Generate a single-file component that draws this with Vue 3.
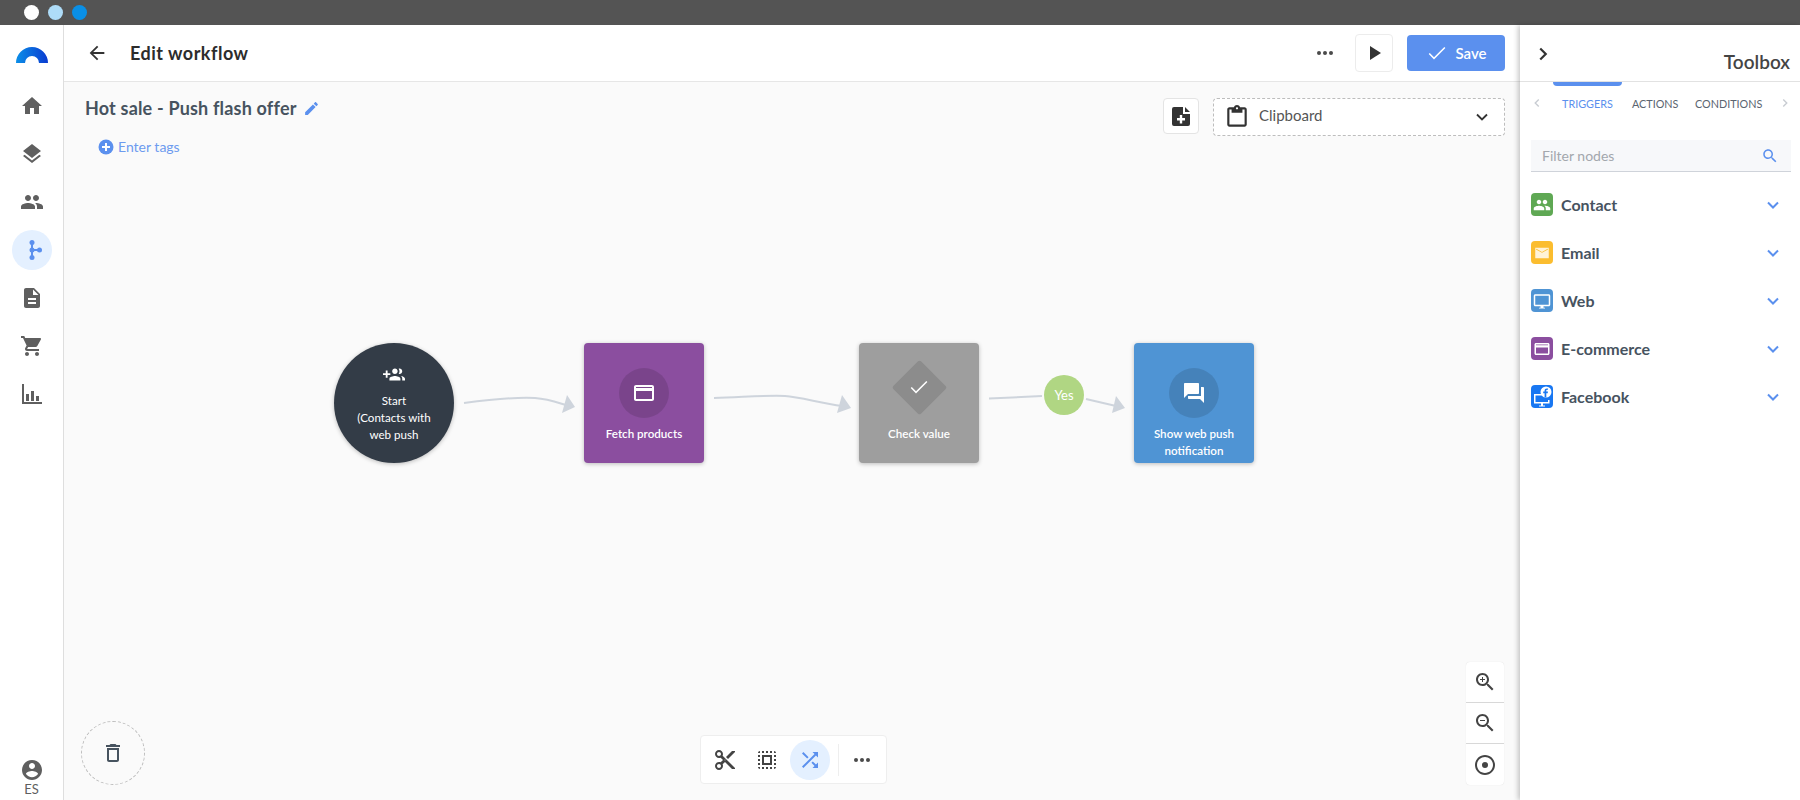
<script setup>
const P = {
  home: 'M10 20v-6h4v6h5v-8h3L12 3 2 12h3v8z',
  layers: 'M11.99 18.54l-7.37-5.73L3 14.07l9 7 9-7-1.63-1.27-7.38 5.74zM12 16l7.36-5.73L21 9l-9-7-9 7 1.63 1.27L12 16z',
  people: 'M16 11c1.66 0 2.99-1.34 2.99-3S17.66 5 16 5c-1.66 0-3 1.34-3 3s1.34 3 3 3zm-8 0c1.66 0 2.99-1.34 2.99-3S9.66 5 8 5C6.34 5 5 6.34 5 8s1.34 3 3 3zm0 2c-2.33 0-7 1.17-7 3.5V19h14v-2.5c0-2.33-4.67-3.5-7-3.5zm8 0c-.29 0-.62.02-.97.05 1.16.84 1.97 1.97 1.97 3.45V19h6v-2.5c0-2.33-4.67-3.5-7-3.5z',
  doc: 'M14 2H6c-1.1 0-1.99.9-1.99 2L4 20c0 1.1.89 2 1.99 2H18c1.1 0 2-.9 2-2V8l-6-6zm2 16H8v-2h8v2zm0-4H8v-2h8v2zm-3-5V3.5L18.5 9H13z',
  cart: 'M7 18c-1.1 0-1.99.9-1.99 2S5.9 22 7 22s2-.9 2-2-.9-2-2-2zM1 2v2h2l3.6 7.59-1.35 2.45c-.16.28-.25.61-.25.96 0 1.1.9 2 2 2h12v-2H7.42c-.14 0-.25-.11-.25-.25l.03-.12.9-1.63h7.45c.75 0 1.41-.41 1.75-1.03l3.58-6.49c.08-.14.12-.31.12-.48 0-.55-.45-1-1-1H5.21l-.94-2H1zm16 16c-1.1 0-1.99.9-1.99 2s.89 2 1.99 2 2-.9 2-2-.9-2-2-2z',
  chart: 'M2 2h2v18h18v2H2zM6 12h3v7H6zM11 9h3v10h-3zM16 14h3v5h-3z',
  account: 'M12 2C6.48 2 2 6.48 2 12s4.48 10 10 10 10-4.48 10-10S17.52 2 12 2zm0 3c1.66 0 3 1.34 3 3s-1.34 3-3 3-3-1.34-3-3 1.34-3 3-3zm0 14.2c-2.5 0-4.71-1.28-6-3.22.03-1.99 4-3.08 6-3.08 1.99 0 5.97 1.09 6 3.08-1.29 1.94-3.5 3.22-6 3.22z',
  back: 'M20 11H7.83l5.59-5.59L12 4l-8 8 8 8 1.41-1.41L7.83 13H20v-2z',
  edit: 'M3 17.25V21h3.75L17.81 9.94l-3.75-3.75L3 17.25zM20.71 7.04c.39-.39.39-1.02 0-1.41l-2.34-2.34c-.39-.39-1.02-.39-1.41 0l-1.83 1.83 3.75 3.75 1.83-1.83z',
  play: 'M8 5v14l11-7z',
  noteAdd: 'M5 3h9v7h7v10a2 2 0 0 1-2 2H5a2 2 0 0 1-2-2V5a2 2 0 0 1 2-2zM16 3l5 5h-5zM10.800 11v3H8v2.500h2.800v3h2.400v-3H16V14h-2.800v-3z',
  clip: 'M19 3h-4.18C14.4 1.84 13.3 1 12 1c-1.3 0-2.4.84-2.82 2H5c-1.1 0-2 .9-2 2v14c0 1.1.9 2 2 2h14c1.1 0 2-.9 2-2V5c0-1.1-.9-2-2-2zm-7 0c.55 0 1 .45 1 1s-.45 1-1 1-1-.45-1-1 .45-1 1-1zm7 16H5V5h2v3h10V5h2v14z',
  search: 'M15.5 14h-.79l-.28-.27C15.41 12.59 16 11.11 16 9.5 16 5.91 13.09 3 9.5 3S3 5.91 3 9.5 5.91 16 9.5 16c1.61 0 3.09-.59 4.23-1.57l.27.28v.79l5 4.99L20.49 19l-4.99-5zm-6 0C7.01 14 5 11.99 5 9.5S7.01 5 9.5 5 14 7.01 14 9.5 11.99 14 9.5 14z',
  card: 'M20 4H4c-1.11 0-1.99.89-1.99 2L2 18c0 1.11.89 2 2 2h16c1.11 0 2-.89 2-2V6c0-1.11-.89-2-2-2zm0 14H4v-8h16v8zm0-11H4V6h16v1z',
  forum: 'M21 6h-2v9H6v2c0 .55.45 1 1 1h11l4 4V7c0-.55-.45-1-1-1zm-4 6V3c0-.55-.45-1-1-1H3c-.55 0-1 .45-1 1v14l4-4h10c.55 0 1-.45 1-1z',
  cut: 'M9.64 7.64c.23-.5.36-1.05.36-1.64 0-2.21-1.79-4-4-4S2 3.79 2 6s1.79 4 4 4c.59 0 1.14-.13 1.64-.36L10 12l-2.36 2.36C7.14 14.13 6.59 14 6 14c-2.21 0-4 1.79-4 4s1.79 4 4 4 4-1.79 4-4c0-.59-.13-1.14-.36-1.64L12 14l7 7h3v-1L9.64 7.64zM6 8c-1.1 0-2-.89-2-2s.9-2 2-2 2 .89 2 2-.9 2-2 2zm0 12c-1.1 0-2-.89-2-2s.9-2 2-2 2 .89 2 2-.9 2-2 2zm6-7.5c-.28 0-.5-.22-.5-.5s.22-.5.5-.5.5.22.5.5-.22.5-.5.5zM19 3l-6 6 2 2 7-7V3z',
  select: 'M3 5h2V3c-1.1 0-2 .9-2 2zm0 8h2v-2H3v2zm4 8h2v-2H7v2zM3 9h2V7H3v2zm10-6h-2v2h2V3zm6 0v2h2c0-1.1-.9-2-2-2zM5 21v-2H3c0 1.1.9 2 2 2zm-2-4h2v-2H3v2zM9 3H7v2h2V3zm2 18h2v-2h-2v2zm8-8h2v-2h-2v2zm0 8c1.1 0 2-.9 2-2h-2v2zm0-12h2V7h-2v2zm0 8h2v-2h-2v2zm-4 4h2v-2h-2v2zm0-16h2V3h-2v2zM7 17h10V7H7v10zm2-8h6v6H9V9z',
  shuffle: 'M10.59 9.17L5.41 4 4 5.41l5.17 5.17 1.42-1.41zM14.5 4l2.04 2.04L4 18.59 5.41 20 17.96 7.46 20 9.5V4h-5.5zm.33 9.41l-1.41 1.41 3.13 3.13L14.5 20H20v-5.5l-2.04 2.04-3.13-3.13z',
  zoomIn: 'M15.5 14h-.79l-.28-.27C15.41 12.59 16 11.11 16 9.5 16 5.91 13.09 3 9.5 3S3 5.91 3 9.5 5.91 16 9.5 16c1.61 0 3.09-.59 4.23-1.57l.27.28v.79l5 4.99L20.49 19l-4.99-5zm-6 0C7.01 14 5 11.99 5 9.5S7.01 5 9.5 5 14 7.01 14 9.5 11.99 14 9.5 14zm2.5-4h-2v2H9v-2H7V9h2V7h1v2h2v1z',
  zoomOut: 'M15.5 14h-.79l-.28-.27C15.41 12.59 16 11.11 16 9.5 16 5.91 13.09 3 9.5 3S3 5.91 3 9.5 5.91 16 9.5 16c1.61 0 3.09-.59 4.23-1.57l.27.28v.79l5 4.99L20.49 19l-4.99-5zm-6 0C7.01 14 5 11.99 5 9.5S7.01 5 9.5 5 14 7.01 14 9.5 11.99 14 9.5 14zM7 9h5v1H7z',
  radio: 'M12 9a3 3 0 1 0 0 6 3 3 0 0 0 0-6zm0-7C6.48 2 2 6.48 2 12s4.48 10 10 10 10-4.48 10-10S17.52 2 12 2zm0 18c-4.42 0-8-3.58-8-8s3.58-8 8-8 8 3.58 8 8-3.58 8-8 8z',
  trash: 'M6 19c0 1.1.9 2 2 2h8c1.1 0 2-.9 2-2V7H6v12zM8 9h8v10H8V9zm7.5-5l-1-1h-5l-1 1H5v2h14V4z',
  groupAdd: 'M8 10H5V7H3v3H0v2h3v3h2v-3h3v-2zm10 1c1.66 0 2.99-1.34 2.99-3S19.66 5 18 5c-.32 0-.63.05-.91.14.57.81.9 1.79.9 2.86s-.34 2.04-.9 2.86c.28.09.59.14.91.14zm-5 0c1.66 0 2.99-1.34 2.99-3S14.66 5 13 5c-1.66 0-3 1.34-3 3s1.34 3 3 3zm6.62 2.16c.83.73 1.38 1.66 1.38 2.84v2h3v-2c0-1.54-2.37-2.49-4.38-2.84zM13 13c-2 0-6 1-6 3v2h12v-2c0-2-4-3-6-3z',
  check: 'M9 16.2L4.8 12l-1.1 1.1L9 18.4 20.4 7l-1.1-1.1z',
  chevDown: 'M6 9l6 6 6-6',
  chevRight: 'M9 6l6 6-6 6',
  chevLeft: 'M15 6l-6 6 6 6',
  monitor: 'M21 3H3c-1.1 0-2 .9-2 2v12c0 1.1.9 2 2 2h7v2H8v1h8v-1h-2v-2h7c1.1 0 2-.9 2-2V5c0-1.1-.9-2-2-2zm0 14H3V5h18v12z'
}
const navTop = ['home', 'layers', 'people']
const navBottom = ['doc', 'cart', 'chart']
const categories = [
  { name: 'Contact', cls: 'c-green', icon: P.people },
  { name: 'Email', cls: 'c-yellow', icon: 'M3 5h18v14H3z M4 7.2l8 4.6 8-4.6-.5-.9-7.5 4.3-7.5-4.3z' },
  { name: 'Web', cls: 'c-blue', icon: P.monitor },
  { name: 'E-commerce', cls: 'c-purple', icon: P.card },
  { name: 'Facebook', cls: 'c-fb', icon: '' }
]
</script>

<template>
  <div class="app">
    <div class="chrome">
      <span class="dot d1"></span><span class="dot d2"></span><span class="dot d3"></span>
    </div>
    <div class="body">
      <nav class="side">
        <svg class="logo" width="32" height="17" viewBox="0 0 32 17">
          <defs>
            <linearGradient id="lg" x1="0" y1="0" x2="1" y2="0">
              <stop offset="0" stop-color="#0b8fe8" /><stop offset="1" stop-color="#0a3bd0" />
            </linearGradient>
          </defs>
          <path d="M0 17a16 16 0 0 1 32 0H23a7 7 0 0 0-14 0z" fill="url(#lg)" />
        </svg>
        <div class="nav-list">
          <span v-for="n in navTop" :key="n" class="nav-item">
            <svg width="24" height="24" viewBox="0 0 24 24"><path :d="P[n]" /></svg>
          </span>
          <span class="nav-item active">
            <svg width="24" height="24" viewBox="0 0 24 24" fill="none" stroke="#5b90ee" stroke-width="2">
              <path d="M12 4.500v15M12 12h7.500" />
              <circle cx="12" cy="4.500" r="2.500" fill="#5b90ee" stroke="none" /><circle cx="12" cy="12" r="2.500" fill="#5b90ee" stroke="none" />
              <circle cx="12" cy="19.500" r="2.500" fill="#5b90ee" stroke="none" /><circle cx="19.500" cy="12" r="2.500" fill="#5b90ee" stroke="none" />
            </svg>
          </span>
          <span v-for="n in navBottom" :key="n" class="nav-item">
            <svg width="24" height="24" viewBox="0 0 24 24"><path :d="P[n]" /></svg>
          </span>
        </div>
        <div class="user">
          <svg width="24" height="24" viewBox="0 0 24 24"><path :d="P.account" /></svg>
          <span>ES</span>
        </div>
      </nav>

      <main class="main">
        <header class="head">
          <svg class="back" width="22" height="22" viewBox="0 0 24 24"><path :d="P.back" /></svg>
          <h1>Edit workflow</h1>
          <span class="more"><i></i><i></i><i></i></span>
          <button class="play"><svg width="24" height="24" viewBox="0 0 24 24"><path :d="P.play" /></svg></button>
          <button class="save">
            <svg width="24" height="24" viewBox="0 0 24 24"><path :d="P.check" /></svg>
            <span>Save</span>
          </button>
        </header>

        <section class="canvas">
          <div class="topline">
            <div>
              <div class="wf-title">
                <span>Hot sale - Push flash offer</span>
                <svg width="17" height="17" viewBox="0 0 24 24"><path :d="P.edit" /></svg>
              </div>
              <div class="tags">
                <svg width="16" height="16" viewBox="0 0 16 16"><circle cx="8" cy="8" r="7.500" fill="#5b90ee" /><path d="M4 8h8M8 4v8" stroke="#fff" stroke-width="2" /></svg>
                <span>Enter tags</span>
              </div>
            </div>
            <div class="tools">
              <button class="add"><svg width="24" height="24" viewBox="0 0 24 24"><path :d="P.noteAdd" fill-rule="evenodd" /></svg></button>
              <div class="clipboard">
                <svg width="26" height="26" viewBox="0 0 24 24"><path :d="P.clip" /></svg>
                <span>Clipboard</span>
                <svg class="cd" width="20" height="20" viewBox="0 0 24 24"><path :d="P.chevDown" /></svg>
              </div>
            </div>
          </div>

          <svg class="wires" width="1456" height="718" viewBox="64 82 1456 718">
            <g fill="none" stroke="#ced4dc" stroke-width="2">
              <path d="M464 403C495 399 520 397 535 398C548 399 556 402 566 405" />
              <path d="M714 398C745 397 770 395 785 396C800 397 820 403 842 406" />
              <path d="M989 398.500L1042 396" />
              <path d="M1086 399L1116 406" />
            </g>
            <g fill="#ced4dc">
              <path d="M567 395L575 407L562 413z" />
              <path d="M842 395L851 408L837 413z" />
              <path d="M1116 396L1125 408L1112 413z" />
            </g>
          </svg>

          <div class="node circle" style="left:270px;top:261px">
            <svg class="ic-s" width="22" height="22" viewBox="0 0 24 24"><path :d="P.groupAdd" /></svg>
            <p>Start<br />(Contacts with<br />web push</p>
          </div>
          <div class="node box purple" style="left:520px;top:261px">
            <span class="badge"><svg width="24" height="24" viewBox="0 0 24 24"><path :d="P.card" /></svg></span>
            <p>Fetch products</p>
          </div>
          <div class="node box gray" style="left:795px;top:261px">
            <span class="badge diamond"></span>
            <svg class="diamond-check" width="24" height="24" viewBox="0 0 24 24"><path :d="P.check" /></svg>
            <p>Check value</p>
          </div>
          <div class="node box blue" style="left:1070px;top:261px">
            <span class="badge"><svg width="24" height="24" viewBox="0 0 24 24"><path :d="P.forum" /></svg></span>
            <p>Show web push<br />notification</p>
          </div>
          <div class="yes" style="left:980px;top:293px">Yes</div>

          <div class="trash"><svg width="24" height="24" viewBox="0 0 24 24"><path :d="P.trash" /></svg></div>

          <div class="toolbar">
            <span class="tb"><svg width="24" height="24" viewBox="0 0 24 24"><path :d="P.cut" /></svg></span>
            <span class="tb sel"><svg width="24" height="24" viewBox="0 0 24 24"><path :d="P.select" /></svg></span>
            <span class="tb on"><svg width="24" height="24" viewBox="0 0 24 24"><path :d="P.shuffle" /></svg></span>
            <span class="sep"></span>
            <span class="more"><i></i><i></i><i></i></span>
          </div>

          <div class="zoom">
            <span><svg width="24" height="24" viewBox="0 0 24 24"><path :d="P.zoomIn" /></svg></span>
            <span><svg width="24" height="24" viewBox="0 0 24 24"><path :d="P.zoomOut" /></svg></span>
            <span><svg width="24" height="24" viewBox="0 0 24 24"><path :d="P.radio" /></svg></span>
          </div>
        </section>
      </main>

      <aside class="panel">
        <div class="p-head">
          <svg width="22" height="22" viewBox="0 0 24 24"><path :d="P.chevRight" /></svg>
          <h2>Toolbox</h2>
        </div>
        <div class="indicator"></div>
        <div class="tabs">
          <svg width="14" height="14" viewBox="0 0 24 24"><path :d="P.chevLeft" /></svg>
          <span class="tab t1 active">TRIGGERS</span>
          <span class="tab t2">ACTIONS</span>
          <span class="tab t3">CONDITIONS</span>
          <svg width="14" height="14" viewBox="0 0 24 24"><path :d="P.chevRight" /></svg>
        </div>
        <div class="filter">
          <span>Filter nodes</span>
          <svg width="18" height="18" viewBox="0 0 24 24"><path :d="P.search" /></svg>
        </div>
        <ul class="cats">
          <li v-for="c in categories" :key="c.name">
            <span class="cat-icon" :class="c.cls">
              <svg v-if="c.icon" width="18" height="18" viewBox="0 0 24 24"><path :d="c.icon" fill-rule="evenodd" /></svg>
              <svg v-else width="22" height="23" viewBox="0 0 22 23">
                <path d="M3 9h8v1.500H4.500v6.500H17v-2h1.500v3.500H12v2h2v1H8v-1h2v-2H3z" fill="#fff" />
                <circle cx="15" cy="7" r="5.500" fill="#fff" />
                <path d="M15.300 12.300V8.200h1.400l.3-1.600h-1.700v-1c0-.5.200-.8.800-.8h.9V3.400h-1.200c-1.300 0-2.200.8-2.200 2.200v1h-1.400v1.600h1.400v4.100z" fill="#1877f2" />
              </svg>
            </span>
            <span class="cat-name">{{ c.name }}</span>
            <svg class="cat-chev" width="20" height="20" viewBox="0 0 24 24"><path :d="P.chevDown" /></svg>
          </li>
        </ul>
      </aside>
    </div>
  </div>
</template>

<style>
html, body { margin: 0; padding: 0; background: #fff; overflow: hidden; }
</style>

<style scoped>
.app { width: 1800px; height: 800px; display: flex; flex-direction: column; font-family: "Lato", "Noto Sans", sans-serif; color: #3b4754; overflow: hidden; }
.chrome { height: 25px; background: #545454; display: flex; align-items: center; gap: 9px; padding-left: 24px; flex: none; }
.dot { width: 15px; height: 15px; border-radius: 50%; }
.d1 { background: #fff; }
.d2 { background: #aedcf8; }
.d3 { background: #0a8fe6; }
.body { flex: 1; display: flex; min-height: 0; }

.side { width: 63px; border-right: 1px solid #dedede; display: flex; flex-direction: column; align-items: center; flex: none; background: #fff; }
.logo { margin-top: 21px; }
.nav-list { display: flex; flex-direction: column; align-items: center; margin-top: 23px; }
.nav-item { width: 40px; height: 40px; margin-bottom: 8px; display: flex; align-items: center; justify-content: center; border-radius: 50%; }
.nav-item svg { fill: #5f5f5f; }
.nav-item.active { background: #e4f0ff; }
.nav-item.active svg { fill: none; }
.user { margin-top: auto; display: flex; flex-direction: column; align-items: center; line-height: 14px; font-size: 13px; color: #5f5f5f; padding-bottom: 4px; }
.user svg { fill: #5f5f5f; display: block; }

.main { flex: 1; display: flex; flex-direction: column; min-width: 0; }
.head { height: 57px; flex: none; box-sizing: border-box; border-bottom: 1px solid #e6e6e6; background: #fff; display: flex; align-items: center; padding: 0 15px 0 22px; }
.back { fill: #333; margin-right: 22px; }
.head h1 { margin: 0; font-size: 18px; font-weight: 700; letter-spacing: .5px; color: #2c2c2c; flex: 1; }
.more { display: inline-flex; gap: 2px; }
.more i { width: 4px; height: 4px; border-radius: 50%; background: #4a4a4a; }
.play { width: 38px; height: 38px; margin-left: 22px; padding: 0; border: 1px solid #ececec; border-radius: 4px; background: #fff; display: flex; align-items: center; justify-content: center; }
.play svg { fill: #333; }
.save { width: 98px; height: 36px; margin-left: 14px; padding: 0; border: 0; border-radius: 4px; background: #5b90ee; color: #fff; font: 600 15px "Lato", sans-serif; display: flex; align-items: center; justify-content: center; gap: 6px; }
.save svg { fill: #fff; }

.canvas { flex: 1; position: relative; background: #fafafa; }
.topline { display: flex; justify-content: space-between; padding: 15px 15px 0 21px; position: relative; z-index: 1; }
.wf-title { display: flex; align-items: center; gap: 6px; font-size: 18px; font-weight: 700; letter-spacing: .18px; color: #47535f; line-height: 22px; }
.wf-title svg { fill: #5b90ee; }
.tags { display: flex; align-items: center; gap: 4px; margin: 19px 0 0 13px; font-size: 14px; color: #6d9bef; line-height: 18px; }
.tools { display: flex; gap: 14px; margin-top: 1px; }
.add { width: 36px; height: 36px; padding: 0; border: 1px solid #e4e4e4; border-radius: 4px; background: #fff; display: flex; align-items: center; justify-content: center; }
.add svg { fill: #333; }
.clipboard { width: 292px; height: 38px; box-sizing: border-box; border: 1px dashed #bdbdbd; border-radius: 4px; background: #fff; display: flex; align-items: center; padding: 0 12px 0 10px; color: #555; font-size: 15px; }
.clipboard span { padding-bottom: 4px; }
.clipboard svg { fill: #333; margin-right: 9px; }
.clipboard .cd { margin: 0 0 0 auto; fill: none; stroke: #333; stroke-width: 2.200; }

.wires { position: absolute; left: 0; top: 0; }
.node { position: absolute; width: 120px; height: 120px; box-sizing: border-box; color: #fff; text-align: center; font-size: 11.600px; line-height: 17px; box-shadow: 0 1px 4px rgba(0,0,0,.25); }
.node p { margin: 0; }
.circle { background: #333c47; border-radius: 50%; padding-top: 21px; }
.ic-s { fill: #fff; display: block; margin: 0 auto 6px; }
.box { border-radius: 4px; padding-top: 25px; font-weight: 600; }
.purple { background: #8b4e9f; }
.gray { background: #9e9e9e; }
.blue { background: #4f94d4; }
.box p { margin-top: 7px; }
.badge { width: 50px; height: 50px; border-radius: 50%; display: flex; align-items: center; justify-content: center; margin: 0 auto; background: rgba(0,0,0,.12); }
.badge svg { fill: #fff; }
.diamond { width: 39px; height: 39px; border-radius: 2px; background: #8c8c8c; transform: rotate(45deg); }
.gray p { margin-top: 18px; }
.diamond-check { position: absolute; left: 48px; top: 32px; fill: #fff; }
.yes { position: absolute; width: 40px; height: 40px; border-radius: 50%; background: #b0d683; color: #fff; font-size: 13px; display: flex; align-items: center; justify-content: center; }

.trash { position: absolute; left: 17px; bottom: 15px; width: 64px; height: 64px; box-sizing: border-box; border: 1px dashed #bdbdbd; border-radius: 50%; display: flex; align-items: center; justify-content: center; }
.trash svg { fill: #47535f; }
.toolbar { position: absolute; left: 636px; bottom: 16px; width: 187px; height: 49px; box-sizing: border-box; background: #fff; border: 1px solid #eee; border-radius: 4px; display: flex; align-items: center; padding-left: 4px; }
.tb { width: 40px; height: 40px; border-radius: 50%; display: flex; align-items: center; justify-content: center; margin-right: 2px; }
.tb.sel { margin-right: 3px; }
.tb svg { fill: #444; }
.tb.on { background: #e4f0ff; }
.tb.on svg { fill: #5b90ee; }
.sep { width: 1px; height: 32px; background: #eee; margin: 0 15px 0 6px; }
.zoom { position: absolute; right: 16px; bottom: 15px; width: 38px; background: #fff; border-radius: 4px; display: flex; flex-direction: column; box-shadow: 0 0 1px rgba(0,0,0,.15); }
.zoom span { height: 41px; display: flex; align-items: center; justify-content: center; border-bottom: 1px solid #d8d8d8; box-sizing: border-box; }
.zoom span:last-child { border-bottom: 0; }
.zoom svg { fill: #444; }

.panel { width: 280px; flex: none; background: #fff; position: relative; box-shadow: -2px 0 5px rgba(0,0,0,.22); z-index: 2; }
.p-head { height: 57px; box-sizing: border-box; border-bottom: 1px solid #e2e2e2; position: relative; padding: 18px 0 0 12px; }
.p-head svg { fill: none; stroke: #333; stroke-width: 2.400; display: block; }
.p-head h2 { position: absolute; right: 10px; top: 25px; margin: 0; font-size: 19px; font-weight: 600; color: #444; line-height: 24px; }
.indicator { width: 69px; height: 4px; margin-left: 33px; background: #5b90ee; border-radius: 0 0 4px 4px; }
.tabs { height: 34px; display: flex; align-items: center; padding-left: 10px; font-size: 10.800px; color: #5a6470; white-space: nowrap; }
.tabs svg { fill: none; stroke: #c8ccd2; stroke-width: 2.400; flex: none; }
.tab { margin-right: 19px; flex: none; }
.t1 { width: 51px; }
.t2 { width: 44px; }
.t3 { width: 65px; margin-right: 18px; }
.tabs svg:first-child { margin-right: 18px; }
.tab.active { color: #5b90ee; }
.filter { margin: 20px 9px 0 11px; height: 32px; box-sizing: border-box; background: #f7f8fa; border-bottom: 1px solid #cfd3da; display: flex; align-items: center; justify-content: space-between; padding: 0 12px 0 11px; font-size: 14px; color: #a3a7ad; }
.filter svg { fill: #5b90ee; }
.cats { list-style: none; margin: 21px 0 0; padding: 0 0 0 11px; }
.cats li { height: 23px; margin-bottom: 25px; display: flex; align-items: center; }
.cat-icon { width: 22px; height: 23px; border-radius: 4px; display: flex; align-items: center; justify-content: center; flex: none; }
.cat-icon svg { fill: #fff; }
.c-green { background: #5fa854; }
.c-yellow { background: #fbbd2f; }
.c-yellow svg { fill: #fff3d8; }
.c-blue { background: #4f94d4; }
.c-purple { background: #8b4e9f; }
.c-fb { background: #1877f2; }
.cat-name { margin-left: 8px; font-size: 16px; font-weight: 700; color: #47535f; }
.cat-chev { position: absolute; left: 243px; fill: none; stroke: #5b90ee; stroke-width: 2.400; }
</style>
